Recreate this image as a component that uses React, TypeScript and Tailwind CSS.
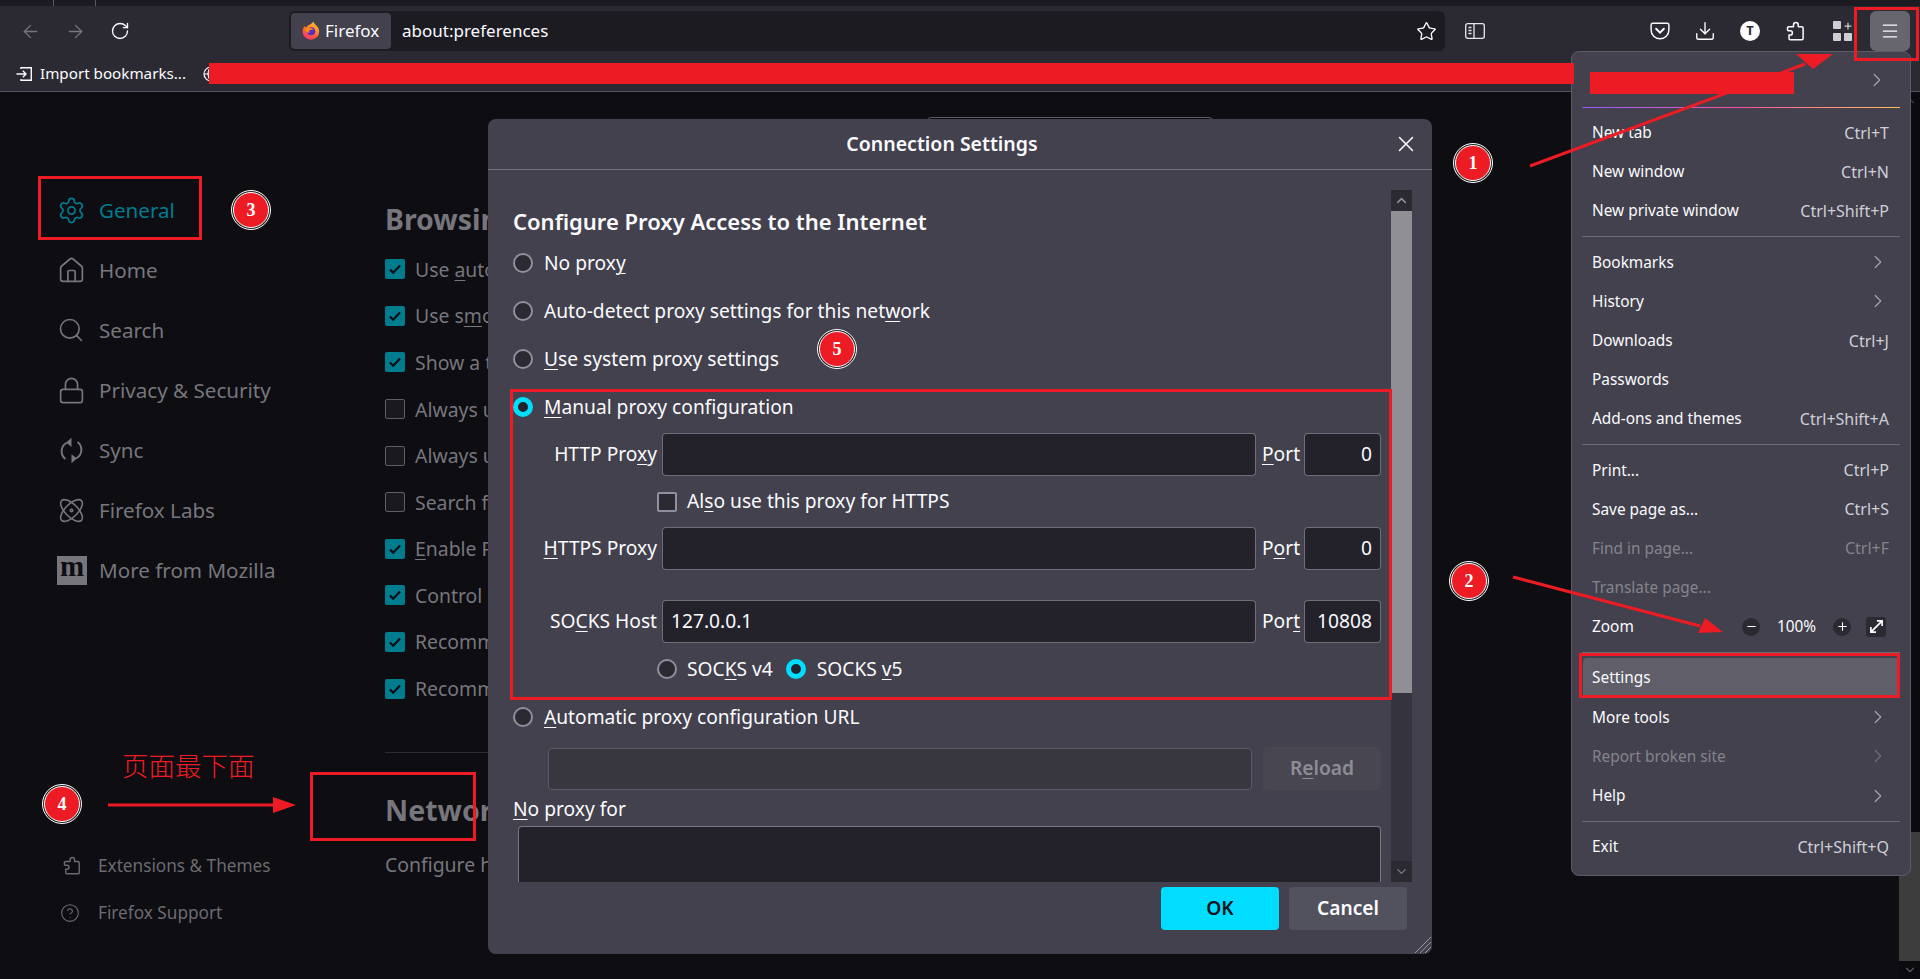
import React from "react";
import { ArrowLeft, ArrowRight, Atom, ChevronDown, ChevronRight, ChevronUp, CircleHelp, Download, Home, Lock, Menu, Minus, Plus, RotateCw, Search, Settings, Star, X } from "lucide-react";

const FONT = "font-['Noto_Sans','Open_Sans',sans-serif]";

// underlined access key
const U = ({ children }: { children: React.ReactNode }) => (
  <span className="underline underline-offset-[3px] decoration-1">{children}</span>
);

const PuzzleIcon = ({ className }: { className?: string }) => (
  <svg viewBox="0 0 16 16" fill="none" stroke="currentColor" strokeWidth="1.2" strokeLinejoin="round" className={className}>
    <path d="M6.8 4.6V3.1a1.9 1.9 0 0 1 3.8 0v1.5h2.9a1 1 0 0 1 1 1V14a1 1 0 0 1-1 1H4.2a1 1 0 0 1-1-1v-2.8h1a1.7 1.7 0 0 0 0-3.4H3a1 1 0 0 1-1-1V5.6a1 1 0 0 1 1-1z" />
  </svg>
);

const SyncIcon = ({ className }: { className?: string }) => (
  <svg viewBox="0 0 24 24" fill="none" stroke="currentColor" strokeWidth="1.6" className={className}>
    <path d="M8 5.6A8 8 0 0 0 7 19" />
    <path d="M16 18.4A8 8 0 0 0 17 5" />
    <path d="M12 1.5 7.5 5.3 12 9z" fill="currentColor" stroke="none" />
    <path d="M12 22.5l4.5-3.8L12 15z" fill="currentColor" stroke="none" />
  </svg>
);

const FirefoxLogo = () => (
  <svg viewBox="0 0 20 20" className="w-5 h-5 shrink-0">
    <defs>
      <linearGradient id="ffBody" x1="0.8" y1="0.1" x2="0.3" y2="1">
        <stop offset="0" stopColor="#ffbd2e" />
        <stop offset="0.55" stopColor="#ff6a2b" />
        <stop offset="1" stopColor="#f5307a" />
      </linearGradient>
    </defs>
    <path d="M12.5 0.6c.3 2 1.6 2.8 3 4.1 1.6 1.5 2.7 3.500 2.700 5.800A8.300 8.300 0 0 1 1.600 10.500c0-2.300.900-4.400 2.400-5.800.100 1 .500 1.500 1.100 2 .900-2.300 3.300-2.600 4.700-3.600 1.300-.9 2.300-1.900 2.700-2.500z" fill="url(#ffBody)" />
    <circle cx="10.200" cy="10.300" r="4" fill="#5a2cc4" />
    <path d="M3.500 8.500c1.400-1.500 4-2.500 6-1.700 2 .7 3.600 2.300 3.200 2.300-1.300-.4-3-.4-4 .2-.8.5-.6 1.600.2 2.200-1.700.4-3.600-.3-5.400-3z" fill="#ff8a16" />
  </svg>
);

const ToolbarBtn = ({ children, className = "" }: { children: React.ReactNode; className?: string }) => (
  <div className={`flex items-center justify-center w-10 h-10 rounded-[4px] shrink-0 ${className}`}>{children}</div>
);

const TopBars = () => (
  <>
    <div className="h-[6px] bg-[#1c1b22] flex shrink-0">
      <div className="ml-[53px] w-px bg-[#5b5a63]" />
      <div className="ml-[41px] w-px bg-[#5b5a63]" />
    </div>
    <div className="h-[50px] bg-[#2b2a33] flex items-center shrink-0 text-[#fbfbfe]">
      <div className="w-[289px] flex items-center shrink-0">
        <ToolbarBtn className="ml-[10px] text-[#77767e]"><ArrowLeft size={21} strokeWidth={1.5} /></ToolbarBtn>
        <ToolbarBtn className="ml-[5px] text-[#77767e]"><ArrowRight size={21} strokeWidth={1.5} /></ToolbarBtn>
        <ToolbarBtn className="ml-[5px]"><RotateCw size={20} strokeWidth={1.6} /></ToolbarBtn>
      </div>
      <div className="w-[1156px] h-[40px] bg-[#1c1b22] rounded-[6px] flex items-center px-[2px] shrink-0">
        <div className="h-[36px] w-[100px] bg-[#42414d] rounded-[4px] flex items-center pl-[10px] gap-[4px]">
          <FirefoxLogo />
          <span className="text-[17px]">Firefox</span>
        </div>
        <span className="ml-[11px] text-[17px]">about:preferences</span>
        <Star size={21} strokeWidth={1.5} className="ml-auto mr-[6px]" />
      </div>
      <svg viewBox="0 0 20 16" fill="none" stroke="#e8e8ea" strokeWidth="1.3" className="w-[20px] h-[16px] ml-[20px] shrink-0">
        <rect x="0.700" y="0.700" width="18.600" height="14.600" rx="2" />
        <path d="M9 1v14M3.500 4.500h3M3.500 7.500h3M3.500 10.500h3" />
      </svg>
      <div className="ml-auto flex items-center">
        <svg viewBox="0 0 18 18" fill="none" stroke="#fbfbfe" strokeWidth="1.3" className="w-5 h-5 mr-[24px]">
          <path d="M2.500 2h13A1.500 1.500 0 0 1 17 3.500V8a8 8 0 0 1-16 0V3.500A1.500 1.500 0 0 1 2.500 2z" />
          <path d="M5.500 7 9 10.500 12.500 7" strokeWidth="1.700" strokeLinecap="round" />
        </svg>
        <Download size={22} strokeWidth={1.5} className="mr-[24px]" />
        <div className="w-5 h-5 rounded-full bg-white flex items-center justify-center text-[#2b2a33] text-[13px] font-bold mr-[25px]">T</div>
        <PuzzleIcon className="w-5 h-5 mr-[28px]" />
        <div className="grid grid-cols-2 gap-[2px] w-[19px] mr-[18px] relative">
          <div className="w-2 h-2 bg-[#cfcfd3] rounded-[1px]" />
          <Plus size={10} strokeWidth={3} className="text-[#cfcfd3] -ml-px" />
          <div className="w-2 h-2 bg-[#cfcfd3] rounded-[1px]" />
          <div className="w-2 h-2 bg-[#cfcfd3] rounded-[1px]" />
        </div>
        <ToolbarBtn className="bg-[#67666e] mr-[10px] rounded-[6px]"><Menu size={20} strokeWidth={1.5} /></ToolbarBtn>
      </div>
    </div>
    <div className="h-[36px] bg-[#2b2a33] border-b border-[#55545e] flex items-center pl-[16px] shrink-0 text-[#fbfbfe]">
      <svg viewBox="0 0 17 16" fill="none" stroke="#fbfbfe" strokeWidth="1.4" className="w-[17px] h-[16px] mr-[7px]">
        <path d="M5 3V1.700h10.300v12.600H5V13M0.500 8h9M6.800 4.800 10 8l-3.200 3.200" />
      </svg>
      <span className="text-[15.2px]">Import bookmarks...</span>
      <svg viewBox="0 0 16 16" fill="none" stroke="#fbfbfe" strokeWidth="1.200" className="w-4 h-4 ml-[17px]">
        <circle cx="8" cy="8" r="7" />
        <path d="M1 8h14M8 1c-4 4-4 10 0 14" />
      </svg>
    </div>
  </>
);

const sideItems = [
  { label: "General", icon: <Settings size={29} strokeWidth={1.4} />, active: true },
  { label: "Home", icon: <Home size={29} strokeWidth={1.4} /> },
  { label: "Search", icon: <Search size={28} strokeWidth={1.4} /> },
  { label: "Privacy & Security", icon: <Lock size={29} strokeWidth={1.4} /> },
  { label: "Sync", icon: <SyncIcon className="w-[29px] h-[29px]" /> },
  { label: "Firefox Labs", icon: <Atom size={29} strokeWidth={1.3} /> },
  {
    label: "More from Mozilla",
    icon: (
      <div className="w-[30px] h-[29px] bg-[#77767c] flex items-center justify-center text-[#0d0d12] font-['Liberation_Serif',serif] font-bold text-[29px] leading-none pb-[7px]">
        m
      </div>
    ),
  },
];

const browsingRows: [React.ReactNode, boolean][] = [
  [<span>Use <U>a</U>uto</span>, true],
  [<span>Use s<U>m</U>ooth</span>, true],
  [<span>Show a touch</span>, true],
  [<span>Always use the</span>, false],
  [<span>Always underline</span>, false],
  [<span>Search for text</span>, false],
  [<span><U>E</U>nable Picture</span>, true],
  [<span>Control media</span>, true],
  [<span>Recommend</span>, true],
  [<span>Recommend</span>, true],
];

const Sidebar = () => (
  <aside className="w-[385px] shrink-0 pt-[88px] pb-[43px] flex flex-col">
    {sideItems.map((item) => (
      <div
        key={item.label}
        className={`h-[60px] flex items-center pl-[57px] ${item.active ? "text-[#007c8f]" : "text-[#77767c]"}`}
      >
        <div className="w-[42px] shrink-0">{item.icon}</div>
        <span className="text-[20.6px]">{item.label}</span>
      </div>
    ))}
    <div className="mt-auto text-[#6c6b71] text-[17.2px]">
      <div className="h-[47px] flex items-center pl-[62px]">
        <PuzzleIcon className="w-[19px] h-[19px] mr-[17px]" />
        <span>Extensions &amp; Themes</span>
      </div>
      <div className="h-[47px] flex items-center pl-[60px]">
        <CircleHelp size={20} strokeWidth={1.3} className="mr-[18px]" />
        <span>Firefox Support</span>
      </div>
    </div>
  </aside>
);

const Content = () => (
  <div className="flex-1 relative whitespace-nowrap text-[#77767c]">
    {/* search box of the page, only its top edge shows above the dialog */}
    <div className="absolute left-[542px] top-[25px] w-[286px] h-[40px] border border-[#5b5a63] rounded-[4px]" />
    <div className="w-[103px] overflow-hidden">
      <div className="h-[40px] mt-[107px] flex items-center text-[#77767c] text-[28.5px] font-bold">Browsing</div>
      <div className="mt-[7px]">
        {browsingRows.map(([label, checked], i) => (
          <div key={i} className="h-[46.6px] flex items-center text-[19.4px]">
            <div
              className={`w-5 h-5 rounded-[2px] mr-[10px] flex items-center justify-center shrink-0 ${
                checked ? "bg-[#007c8f] text-[#0d0d12]" : "border border-[#5f5e63] bg-[#19191e]"
              }`}
            >
              {checked && (
                <svg viewBox="0 0 16 16" fill="none" stroke="currentColor" strokeWidth="2.200" className="w-4 h-4">
                  <path d="M3 8.500l3.200 3.200L13 4.500" />
                </svg>
              )}
            </div>
            {label}
          </div>
        ))}
      </div>
      <div className="mt-[40px] h-px bg-[#2a2a30]" />
      <div className="h-[40px] mt-[37px] flex items-center text-[28.5px] font-bold">Network</div>
      <div className="mt-[23px] h-[24px] flex items-center text-[19.4px]">Configure how</div>
    </div>
  </div>
);

const PageScrollbar = () => (
  <div className="w-[21px] shrink-0 flex flex-col items-center bg-[#0b0b0f]">
    <ChevronUp size={14} className="text-[#3c3c40] mt-[2px]" />
    <div className="flex-1 w-full flex flex-col justify-end">
      <div className="h-[129px] bg-[#3d3d3e]" />
    </div>
    <ChevronDown size={14} className="text-[#5a5a60] my-[2px]" />
  </div>
);

const Radio = ({ on = false }: { on?: boolean }) =>
  on ? (
    <div className="w-5 h-5 rounded-full border-[5px] border-[#00ddff] bg-[#23222b] shrink-0" />
  ) : (
    <div className="w-5 h-5 rounded-full border-2 border-[#8f8f9d] bg-[#2b2a33] shrink-0" />
  );

const Field = ({ value = "", w, right = false }: { value?: string; w: string; right?: boolean }) => (
  <div className={`${w} h-[43px] bg-[#23222b] border border-[#8f8f9d]/70 rounded-[4px] flex items-center px-[8px] shrink-0 ${right ? "justify-end" : ""}`}>
    {value}
  </div>
);

const ProxyRow = ({ label, port, value = "", portValue }: { label: React.ReactNode; port: React.ReactNode; value?: string; portValue: string }) => (
  <div className="flex items-center">
    <div className="w-[144px] text-right shrink-0">{label}</div>
    <div className="ml-[5px]"><Field w="w-[594px]" value={value} /></div>
    <div className="ml-[6px] w-[37px] shrink-0">{port}</div>
    <div className="ml-[5px]"><Field w="w-[77px]" value={portValue} right /></div>
  </div>
);

const OptionRow = ({ children, on = false }: { children: React.ReactNode; on?: boolean }) => (
  <div className="h-[48px] flex items-center gap-[11px]">
    <Radio on={on} />
    <span>{children}</span>
  </div>
);

const ConnectionDialog = () => (
  <div className="absolute z-10 left-[488px] top-[119px] w-[944px] h-[835px] bg-[#42414d] rounded-[8px] flex flex-col text-[#fbfbfe] text-[19.2px] overflow-hidden whitespace-nowrap">
    <div className="h-[50px] border-b border-[#72717c] box-content flex items-center justify-center pr-[36px] relative shrink-0">
      <span className="font-semibold text-[19.5px]">Connection Settings</span>
      <X size={26} strokeWidth={1.4} className="absolute right-[13px] top-[12px]" />
    </div>
    <div className="h-[712px] flex shrink-0 overflow-hidden">
      <div className="w-[903px] pl-[25px] pt-[36px] shrink-0 relative">
        <div className="h-[30px] flex items-center text-[22px] font-semibold">Configure Proxy Access to the Internet</div>
        <div className="mt-[3px]">
          <OptionRow>No prox<U>y</U></OptionRow>
          <OptionRow>Auto-detect proxy settings for this net<U>w</U>ork</OptionRow>
          <OptionRow><U>U</U>se system proxy settings</OptionRow>
          <OptionRow on><U>M</U>anual proxy configuration</OptionRow>
        </div>
        <div className="mt-[2px]">
          <ProxyRow label={<>HTTP Pro<U>x</U>y</>} port={<><U>P</U>ort</>} portValue="0" />
          <div className="h-[51px] flex items-center pl-[144px] gap-[10px]">
            <div className="w-5 h-5 rounded-[2px] border-2 border-[#8f8f9d] bg-[#2b2a33]" />
            <span>Al<U>s</U>o use this proxy for HTTPS</span>
          </div>
          <ProxyRow label={<><U>H</U>TTPS Proxy</>} port={<>P<U>o</U>rt</>} portValue="0" />
          <div className="mt-[30px]">
            <ProxyRow label={<>SO<U>C</U>KS Host</>} port={<>Por<U>t</U></>} value="127.0.0.1" portValue="10808" />
          </div>
          <div className="h-[52px] flex items-center pl-[144px]">
            <Radio /><span className="ml-[10px]">SOC<U>K</U>S v4</span>
            <div className="ml-[13px]"><Radio on /></div><span className="ml-[11px]">SOCKS <U>v</U>5</span>
          </div>
        </div>
        <div className="h-[44px] flex items-center gap-[11px]"><Radio /><span><U>A</U>utomatic proxy configuration URL</span></div>
        <div className="mt-[8px] flex items-center">
          <div className="ml-[35px] w-[704px] h-[42px] shrink-0 bg-[#383740] border border-[#5c5b66] rounded-[4px]" />
          <div className="ml-[11px] w-[118px] h-[43px] shrink-0 bg-[#474651] rounded-[4px] flex items-center justify-center font-semibold text-[#8e8d96]">
            <span>R<U>e</U>load</span>
          </div>
        </div>
        <div className="mt-[7px] h-[24px] flex items-center"><span><U>N</U>o proxy for</span></div>
        <div className="mt-[5px] ml-[5px] w-[863px] h-[150px] bg-[#23222b] border border-[#8f8f9d]/80 rounded-[4px]" />
      </div>
      <div className="w-[21px] shrink-0 mt-[20px] flex flex-col bg-[#35343e]">
        <div className="h-[21px] bg-[#2b2a33] flex items-center justify-center text-[#8f8f94]"><ChevronUp size={15} strokeWidth={2.5} /></div>
        <div className="h-[482px] bg-[#8f8f94]" />
        <div className="mt-auto h-[21px] bg-[#2b2a33] flex items-center justify-center text-[#7c7c82]"><ChevronDown size={15} strokeWidth={2} /></div>
      </div>
    </div>
    <div className="flex-1 relative flex justify-end gap-[10px] pt-[5px] pr-[25px] font-semibold">
      <div className="w-[118px] h-[43px] bg-[#00ddff] text-[#15141a] rounded-[4px] flex items-center justify-center">OK</div>
      <div className="w-[118px] h-[43px] bg-[#52515e] rounded-[4px] flex items-center justify-center">Cancel</div>
      <svg viewBox="0 0 18 18" stroke="#9a9aa0" strokeWidth="1" className="absolute right-0 bottom-0 w-[18px] h-[18px]">
        <path d="M1 17 17 1M6 17 17 6M11 17l6-6M15 17l2-2" />
      </svg>
    </div>
  </div>
);

type MenuRow =
  | { sep: true }
  | { label: string; shortcut?: string; arrow?: boolean; dim?: boolean; hot?: boolean; zoom?: boolean };

const menuRows: MenuRow[] = [
  { label: "New tab", shortcut: "Ctrl+T" },
  { label: "New window", shortcut: "Ctrl+N" },
  { label: "New private window", shortcut: "Ctrl+Shift+P" },
  { sep: true },
  { label: "Bookmarks", arrow: true },
  { label: "History", arrow: true },
  { label: "Downloads", shortcut: "Ctrl+J" },
  { label: "Passwords" },
  { label: "Add-ons and themes", shortcut: "Ctrl+Shift+A" },
  { sep: true },
  { label: "Print...", shortcut: "Ctrl+P" },
  { label: "Save page as...", shortcut: "Ctrl+S" },
  { label: "Find in page...", shortcut: "Ctrl+F", dim: true },
  { label: "Translate page...", dim: true },
  { label: "Zoom", zoom: true },
  { sep: true },
  { label: "Settings", hot: true },
  { label: "More tools", arrow: true },
  { label: "Report broken site", arrow: true, dim: true },
  { label: "Help", arrow: true },
  { sep: true },
  { label: "Exit", shortcut: "Ctrl+Shift+Q" },
];

const AppMenu = () => (
  <div className="absolute z-10 left-[1571px] top-[51px] w-[340px] h-[825px] bg-[#42414d] border border-[#5b5a66] rounded-[8px] text-[#fbfbfe] text-[15.4px] whitespace-nowrap flex flex-col">
    <div className="h-[55px] flex items-center justify-end pr-[22px] shrink-0">
      <ChevronRight size={22} strokeWidth={1.3} className="text-[#a5a4ad]" />
    </div>
    <div className="h-px mx-[10px] shrink-0 bg-gradient-to-r from-[#9059ff] via-[#ff4aa2] to-[#ffbd4f]" />
    <div className="h-[5px] shrink-0" />
    {menuRows.map((row, i) => {
      if ("sep" in row) return <div key={i} className="h-px my-[5.5px] mx-[10px] bg-[#6c6b76] shrink-0" />;
      return (
        <div
          key={row.label}
          className={`h-[39.2px] flex items-center shrink-0 mx-[11px] pl-[9px] pr-[10px] rounded-[4px] ${row.hot ? "bg-[#5f5e69]" : ""} ${
            row.dim ? "text-[#85848d]" : ""
          }`}
        >
          <span>{row.label}</span>
          {row.shortcut && <span className={`ml-auto text-[16px] ${row.dim ? "text-[#85848d]" : "text-[#cfcfd8]"}`}>{row.shortcut}</span>}
          {row.arrow && (
            <ChevronRight size={22} strokeWidth={1.3} className={`ml-auto ${row.dim ? "text-[#6f6e78]" : "text-[#a5a4ad]"}`} />
          )}
          {row.zoom && (
            <div className="ml-auto flex items-center mr-[3px]">
              <div className="w-[18px] h-[18px] rounded-full bg-[#2b2a33] flex items-center justify-center"><Minus size={13} strokeWidth={2} /></div>
              <span className="w-[73px] text-center">100%</span>
              <div className="w-[18px] h-[18px] rounded-full bg-[#2b2a33] flex items-center justify-center"><Plus size={13} strokeWidth={2} /></div>
              <div className="ml-[15px] w-5 h-5 rounded-[3px] bg-[#2b2a33] flex items-center justify-center">
                <svg viewBox="0 0 16 16" fill="none" stroke="#fbfbfe" strokeWidth="1.800" className="w-[15px] h-[15px]">
                  <path d="M2 14 14 2M8.500 2H14v5.500M7.500 14H2V8.500" />
                </svg>
              </div>
            </div>
          )}
        </div>
      );
    })}
  </div>
);

const Badge = ({ n, pos }: { n: number; pos: string }) => (
  <div className={`absolute z-20 ${pos} w-10 h-10 rounded-full border border-white bg-[#222] p-px`}>
    <div className="w-full h-full rounded-full border border-white bg-[#ed1c24] flex items-center justify-center text-white font-bold text-[18px] font-['Liberation_Serif',serif]">
      {n}
    </div>
  </div>
);

const Annotations = () => (
  <>
    {/* masked-out account and bookmark names */}
    <div className="absolute z-20 left-[209px] top-[63px] w-[1365px] h-[21px] bg-[#ed1c24]" />
    <div className="absolute z-20 left-[1590px] top-[72px] w-[204px] h-[22px] bg-[#ed1c24]" />
    {/* red boxes */}
    <div className="absolute z-20 left-[1854px] top-[7px] w-[65px] h-[54px] border-[3px] border-[#ed1c24]" />
    <div className="absolute z-20 left-[38px] top-[176px] w-[164px] h-[64px] border-[3px] border-[#ed1c24]" />
    <div className="absolute z-20 left-[310px] top-[772px] w-[166px] h-[69px] border-[3px] border-[#ed1c24]" />
    <div className="absolute z-20 left-[510px] top-[389px] w-[882px] h-[311px] border-[3px] border-[#ed1c24]" />
    <div className="absolute z-20 left-[1579px] top-[653px] w-[321px] h-[45px] border-[3px] border-[#ed1c24]" />
    {/* arrows */}
    <svg viewBox="0 0 1920 979" className="absolute z-20 inset-0 w-[1920px] h-[979px] pointer-events-none">
      <path d="M1530 166 1805 64" stroke="#ed1c24" strokeWidth="3" />
      <path d="M1833 54 1813 69 1796 54z" fill="#ed1c24" />
      <path d="M1513 577 1700 626" stroke="#ed1c24" strokeWidth="3" />
      <path d="M1723 632 1698 633 1705 618z" fill="#ed1c24" />
      <path d="M108 805H275" stroke="#ed1c24" strokeWidth="3" />
      <path d="M296 805 273 797V813z" fill="#ed1c24" />
    </svg>
    <Badge n={1} pos="left-[1453px] top-[143px]" />
    <Badge n={2} pos="left-[1449px] top-[561px]" />
    <Badge n={3} pos="left-[231px] top-[190px]" />
    <Badge n={4} pos="left-[42px] top-[784px]" />
    <Badge n={5} pos="left-[817px] top-[329px]" />
    <div className="absolute z-20 left-[122px] top-[747px] text-[26.5px] leading-[36px] text-[#ed1c24] font-['Noto_Sans_CJK_SC',serif] font-light whitespace-nowrap">
      页面最下面
    </div>
  </>
);

export default function App() {
  return (
    <div className={`relative w-[1920px] h-[979px] overflow-hidden bg-[#0d0d12] flex flex-col ${FONT}`}>
      <TopBars />
      <div className="flex-1 flex min-h-0">
        <Sidebar />
        <Content />
        <PageScrollbar />
      </div>
      <ConnectionDialog />
      <AppMenu />
      <Annotations />
    </div>
  );
}
